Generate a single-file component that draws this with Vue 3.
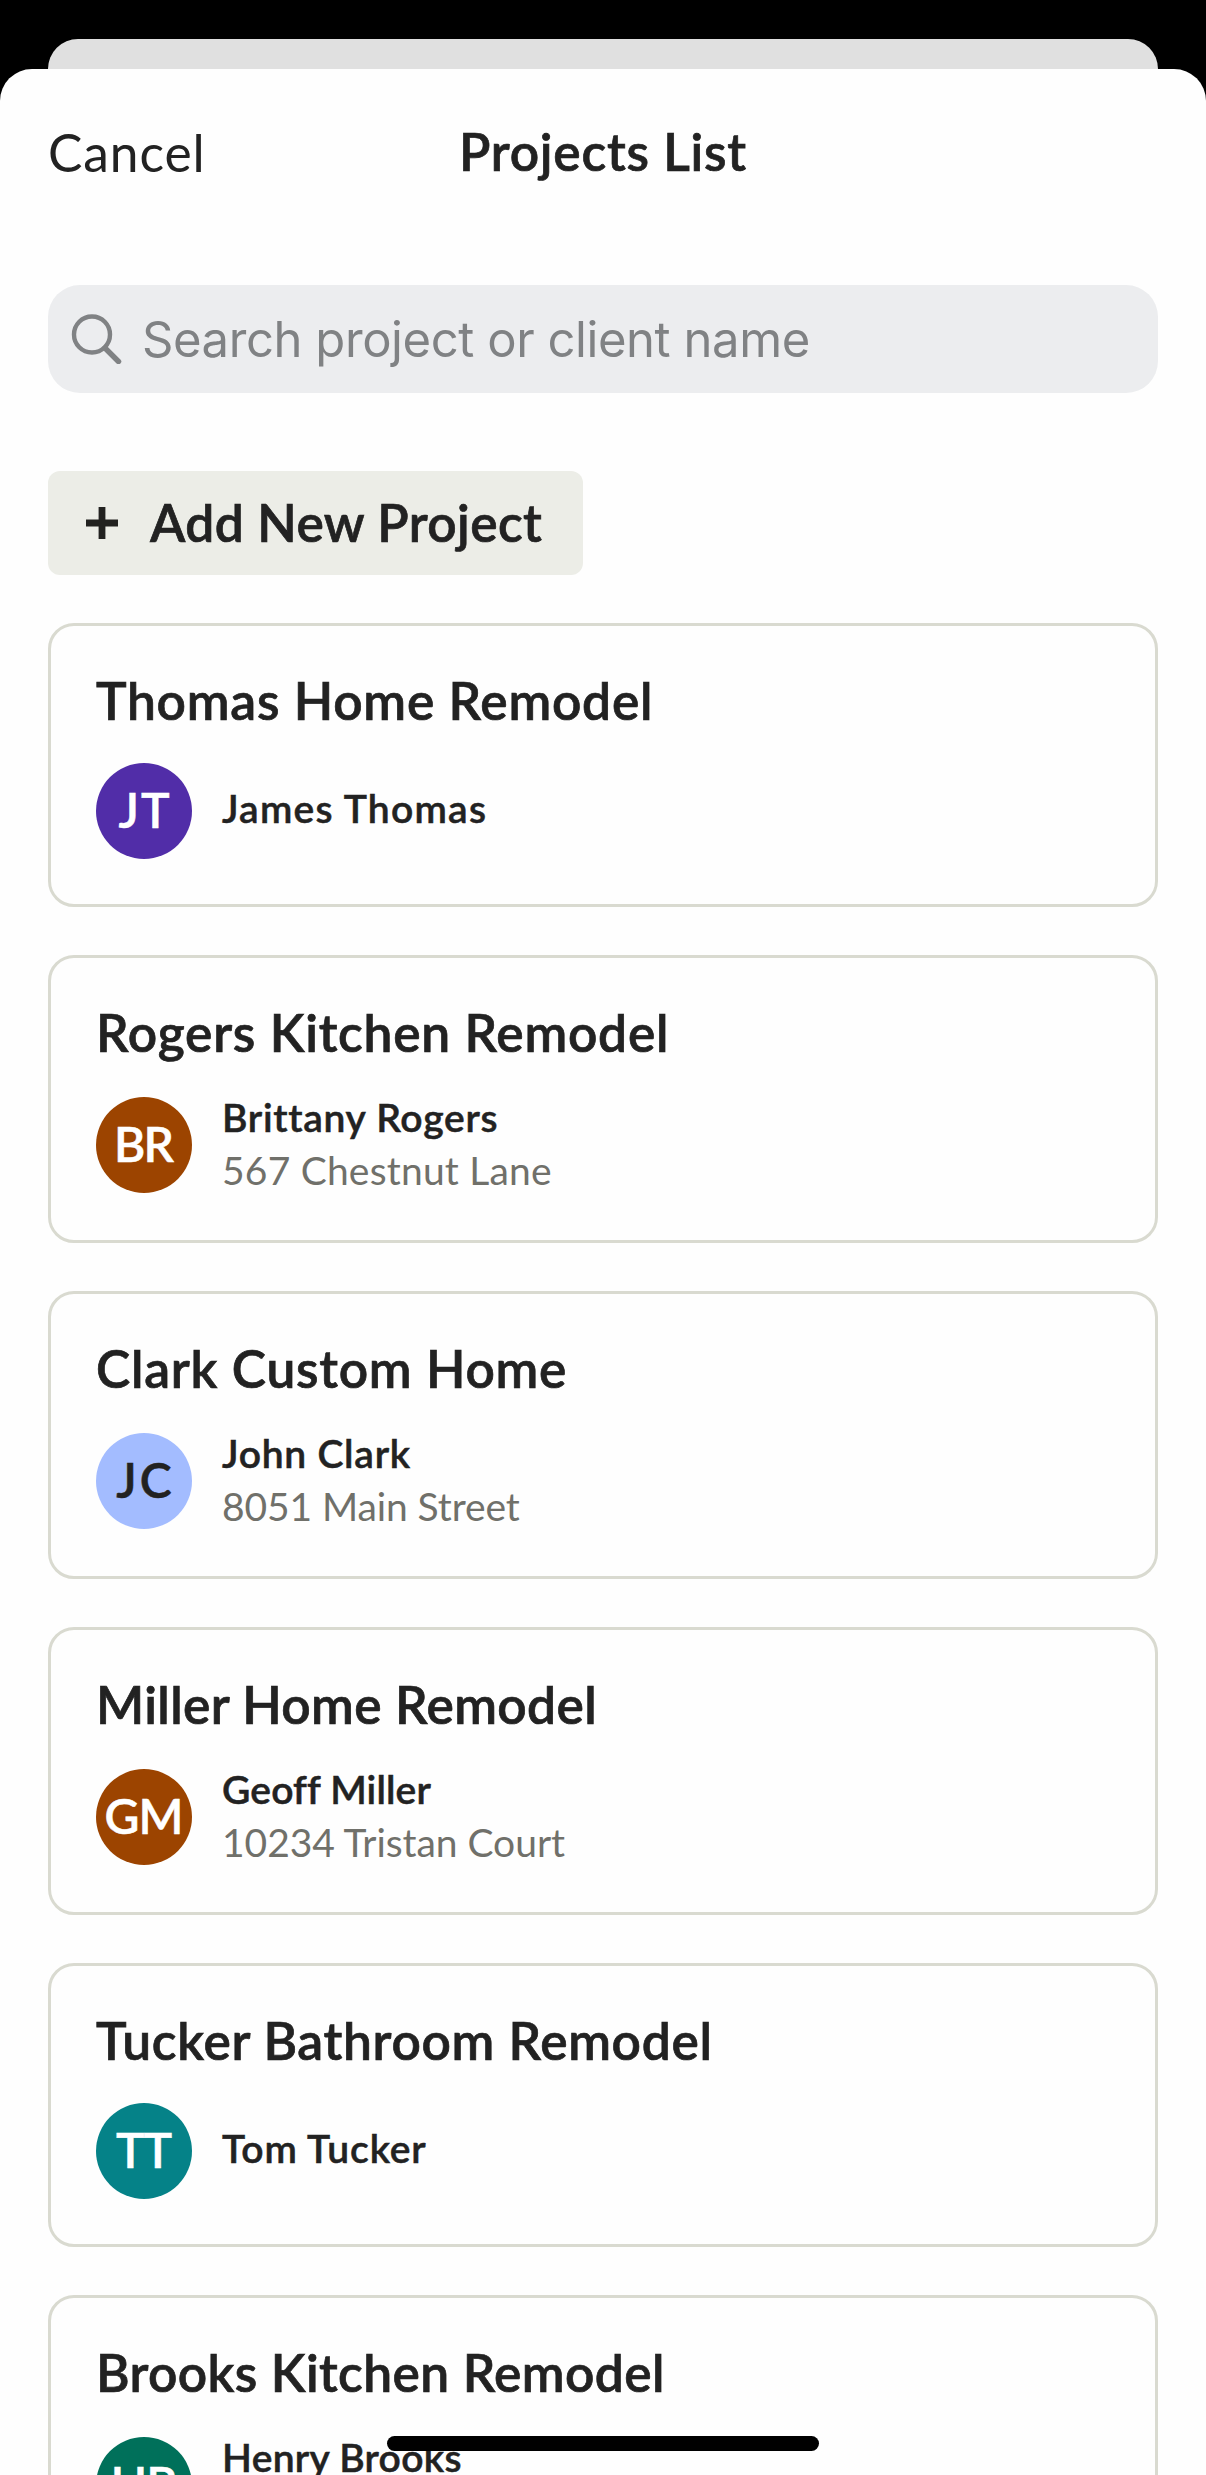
<script setup>
const projects = [
  { title: 'Thomas Home Remodel', track: 0.75, client: 'James Thomas', clientTrack: 1.25, initials: 'JT', bg: '#512da8', fg: '#ffffff', iTrack: 2 },
  { title: 'Rogers Kitchen Remodel', track: 0.76, client: 'Brittany Rogers', clientTrack: 0.72, address: '567 Chestnut Lane', addressTrack: 0.2, initials: 'BR', bg: '#9c4400', fg: '#ffffff', iTrack: -2 },
  { title: 'Clark Custom Home', track: 0.75, client: 'John Clark', clientTrack: 0.75, address: '8051 Main Street', addressTrack: -0.1, initials: 'JC', bg: '#a3bcff', fg: '#222222', iTrack: 3 },
  { title: 'Miller Home Remodel', track: 0.36, client: 'Geoff Miller', clientTrack: 0.15, address: '10234 Tristan Court', addressTrack: -0.05, initials: 'GM', bg: '#9c4400', fg: '#ffffff', iTrack: -1 },
  { title: 'Tucker Bathroom Remodel', track: 0.67, client: 'Tom Tucker', clientTrack: 0.85, initials: 'TT', bg: '#058288', fg: '#ffffff', iTrack: -1 },
  { title: 'Brooks Kitchen Remodel', track: 0.38, client: 'Henry Brooks', clientTrack: 0.3, address: ' ', addressTrack: 0, initials: 'HB', bg: '#00705a', fg: '#ffffff', iTrack: -1 }
]
const spacing = (n) => ({ letterSpacing: n + 'px' })
</script>

<template>
  <div class="screen">
    <div class="backdrop-sheet"></div>
    <main class="sheet">
      <header class="nav">
        <button class="cancel">Cancel</button>
        <h1>Projects List</h1>
        <span></span>
      </header>

      <div class="search">
        <svg width="52" height="52" viewBox="0 0 52 52" fill="none" stroke="#808284" stroke-linecap="round">
          <ellipse cx="22" cy="22.5" rx="18" ry="18" stroke-width="4.4" />
          <path d="M35 36 L48.5 49.5" stroke-width="5.4" />
        </svg>
        <span>Search project or client name</span>
      </div>

      <button class="add">
        <svg width="32" height="32" viewBox="0 0 32 32" stroke="#222220" stroke-width="6.8">
          <path d="M0 16H32M16 0V32" />
        </svg>
        <span>Add New Project</span>
      </button>

      <section class="list">
        <article v-for="p in projects" :key="p.title" class="card">
          <h2 :style="spacing(p.track)">{{ p.title }}</h2>
          <div class="row" :class="{ tall: p.address }">
            <div class="avatar" :style="{ background: p.bg, color: p.fg, letterSpacing: p.iTrack + 'px', textIndent: p.iTrack + 'px' }">{{ p.initials }}</div>
            <div class="who">
              <span class="client" :style="spacing(p.clientTrack)">{{ p.client }}</span>
              <span v-if="p.address" class="address" :style="spacing(p.addressTrack)">{{ p.address }}</span>
            </div>
          </div>
        </article>
      </section>
    </main>
    <div class="home-indicator"></div>
  </div>
</template>

<style>
html, body { margin: 0; background: #000; overflow: hidden; }
</style>

<style scoped>
* { box-sizing: border-box; }
.screen {
  position: relative;
  width: 1206px;
  height: 2475px;
  padding-top: 39px;
  overflow: hidden;
  background: #000;
  color: #222;
  font-family: Lato, "Open Sans", sans-serif;
}
.backdrop-sheet {
  height: 60px;
  margin: 0 48px -30px;
  border-radius: 30px 30px 0 0;
  background: #e0e0e0;
}
.sheet {
  position: relative;
  height: 2406px;
  padding: 0 48px;
  border-radius: 32px 32px 0 0;
  background: #fefefe;
  overflow: hidden;
}
button {
  border: 0;
  padding: 0;
  background: none;
  font: inherit;
  color: inherit;
}
.nav {
  display: grid;
  grid-template-columns: 1fr auto 1fr;
  align-items: start;
  height: 216px;
  padding-top: 52px;
}
.nav h1 {
  margin: 0;
  font-size: 51.5px;
  line-height: 60px;
  font-weight: 600;
  letter-spacing: 0.75px;
  -webkit-text-stroke: 0.7px currentColor;
}
.cancel {
  justify-self: start;
  padding-top: 1px;
  font-size: 51.5px;
  line-height: 60px;
  letter-spacing: 0.9px;
}
.search {
  display: flex;
  align-items: center;
  gap: 20px;
  height: 108px;
  padding: 0 22px;
  border-radius: 32px;
  background: #ecedef;
  color: #808284;
  font-family: Inter, sans-serif;
  font-size: 49px;
  letter-spacing: -0.43px;
}
.search svg { margin: -2px 0 0; }
.search span { white-space: nowrap; line-height: 60px; padding-top: 2px; }
.add {
  display: flex;
  align-items: center;
  gap: 32px;
  width: 535px;
  height: 104px;
  margin: 78px 0 48px;
  padding-left: 38px;
  border-radius: 12px;
  background: #ecede7;
  font-size: 51.5px;
  line-height: 60px;
  font-weight: 600;
  letter-spacing: 0.4px;
  white-space: nowrap;
  -webkit-text-stroke: 0.7px currentColor;
}
.add span { padding-bottom: 3px; }
.list {
  display: flex;
  flex-direction: column;
  gap: 48px;
}
.card {
  padding: 45px;
  border: 3px solid #d9dad0;
  border-radius: 26px;
}
.card h2 {
  margin: 0 0 34px;
  font-size: 51.5px;
  line-height: 58px;
  font-weight: 600;
  white-space: nowrap;
  -webkit-text-stroke: 0.7px currentColor;
}
.row {
  display: flex;
  align-items: center;
  gap: 30px;
  height: 96px;
}
.row.tall { height: 100px; }
.avatar {
  width: 96px;
  height: 96px;
  flex: none;
  border-radius: 50%;
  font-size: 48px;
  line-height: 94px;
  font-weight: 600;
  text-align: center;
  white-space: nowrap;
  -webkit-text-stroke: 0.5px currentColor;
}
.who {
  display: flex;
  flex-direction: column;
  gap: 8px;
  padding-bottom: 6px;
  font-size: 39px;
  line-height: 45px;
  white-space: nowrap;
}
.tall .who { align-self: flex-start; padding: 0; }
.client {
  font-weight: 600;
  -webkit-text-stroke: 0.5px currentColor;
}
.address { color: #70706a; }
.home-indicator {
  position: absolute;
  left: 387px;
  bottom: 24px;
  width: 432px;
  height: 15px;
  border-radius: 8px;
  background: #000;
}
</style>
